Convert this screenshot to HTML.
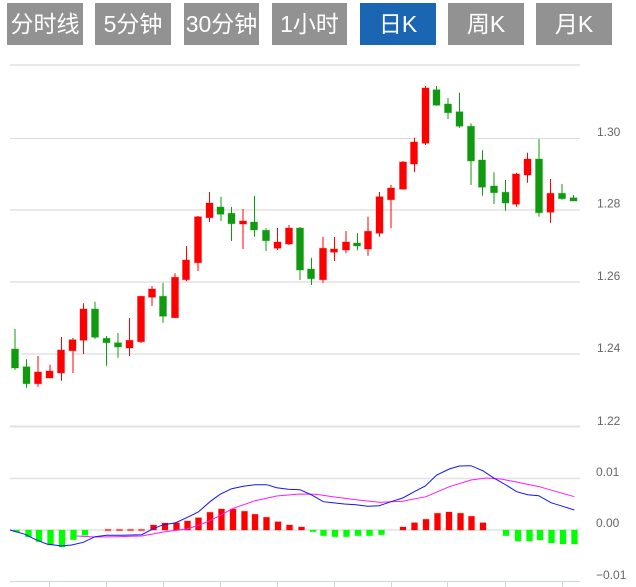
<!DOCTYPE html>
<html lang="zh">
<head>
<meta charset="utf-8">
<title>K线</title>
<style>
html,body{margin:0;padding:0;background:#fff;width:636px;height:587px;overflow:hidden}
body{position:relative;font-family:"Liberation Sans","Noto Sans CJK SC",sans-serif}
.b{position:absolute;top:3px;height:42px;line-height:42px;background:#929292;color:#fff;font-size:23px;text-align:center;white-space:nowrap}
.on{background:#1a66b3}
svg{position:absolute;left:0;top:0}
text{font-family:"Liberation Sans",sans-serif;font-size:12px;fill:#666}
</style>
</head>
<body>
<div class="b" style="left:7px;width:76px">分时线</div>
<div class="b" style="left:95px;width:76px">5分钟</div>
<div class="b" style="left:184px;width:75px">30分钟</div>
<div class="b" style="left:272px;width:75px">1小时</div>
<div class="b on" style="left:360px;width:76px">日K</div>
<div class="b" style="left:448px;width:76px">周K</div>
<div class="b" style="left:536px;width:76px">月K</div>
<svg width="636" height="587" viewBox="0 0 636 587" fill="none">
<g stroke="#e2e2e2">
<path d="M10 65H580" stroke-width="2" stroke="#e8e8e8"/>
<path d="M10 138.5H417M477 138.5H580" stroke="#dcdcdc"/>
<path d="M10 210H580M10 282H580M21 354H68M72 354H580" stroke-width="1.5"/>
<path d="M10 426.5H580" stroke-width="2"/>
<path d="M10 478.5H580" stroke-width="1.5"/>
<path d="M10 530H580" stroke-width="1.5"/>
</g>
<path d="M10 581.5H580M49.5 581V587M106.5 581V587M163.5 581V587M220.5 581V587M277.5 581V587M334.5 581V587M391.5 581V587M447.5 581V587M505.5 581V587M562.5 581V587" stroke="#ccd6eb"/>
<!-- red wicks -->
<path stroke="#f00" d="M38 356V386.7M50 364.7V378M61.5 337V380.7M73 338V373M83.5 303.3V354M129.5 318V356M141 296V343M152 286V306M175 273.3V318M186.5 246V281.3M198 216V271M209.5 192V222M243 209V249M277.5 228V250M289 225V245M323 236.7V282.7M334.5 237V261M346 231V253.3M368 216.7V255.7M379.5 192V236.7M391 185V228.3M403 161V189.3M414.5 137.7V172.3M425.5 86V145M516.5 172.7V206.7M527.5 152.7V182.7M550.5 179V222.7"/>
<!-- green wicks -->
<path stroke="#109a10" d="M15 329V370M26.5 359.3V387.7M95 301.7V339M106.5 336V365.7M118 333V357.7M163 282.7V322.7M221 196.7V221M231.5 207V241M254.5 195.7V236.7M266 228.3V251M300 227V280M311.5 257.7V285M357.5 233.3V250.3M436.5 86V105.7M448 98V119M459.5 92.7V127.7M471 123.3V185M482.5 150.3V195.7M494 172.3V204M505.5 180V210.7M539 139V216.7M562 184V199.7M573.5 195V201"/>
<!-- red bodies -->
<path fill="#f00" stroke="#f00" stroke-opacity=".35" d="M34.5 372h7v11.7h-7zM46 371h7v7h-7zM57.5 350h7v23h-7zM69 339.7h7v11h-7zM80 309h7v31.3h-7zM126 340.3h7v7.7h-7zM137.5 296.3h7v45.4h-7zM148.5 289h7v8.3h-7zM171.5 277.3h7v40.4h-7zM182.5 260h7v19.7h-7zM194.5 216.7h7v46h-7zM206 203h7v14.7h-7zM239.5 221h7v3h-7zM274 242h7v6.3h-7zM285.5 228h7v16h-7zM319.5 248.3h7v31.4h-7zM330.5 249h7v3.3h-7zM342.5 242h7v8h-7zM364.5 231.3h7v17.7h-7zM376 196.7h7v36.6h-7zM387.5 188h7v11.7h-7zM399.5 162h7v27.3h-7zM410.5 142h7v22h-7zM422 88h7v55.3h-7zM512.5 174h7v30.3h-7zM524 159h7v16h-7zM547 193.3h7v19h-7z"/>
<!-- green bodies -->
<path fill="#109a10" stroke="#109a10" stroke-opacity=".35" d="M11.5 349h7v19h-7zM23 366.7h7v17h-7zM91.5 309h7v28.3h-7zM103 338.3h7v4.4h-7zM114.5 342.7h7v4.3h-7zM159.5 296.3h7v20h-7zM217 207h7v7.3h-7zM228 213.3h7v10.4h-7zM250.5 222h7v8h-7zM262.5 230.3h7v10.4h-7zM296.5 228h7v42h-7zM307.5 269h7v9.7h-7zM353.5 243h7v3h-7zM433 89.7h7v15.6h-7zM444.5 104h7v8.7h-7zM456 111.7h7v14.6h-7zM467.5 126.3h7v34.7h-7zM478.5 160h7v27.3h-7zM490.5 186h7v6.7h-7zM502 192.3h7v10.7h-7zM535.5 159h7v53.7h-7zM558.5 193.3h7v5.4h-7zM570 197.7h7v3.3h-7z"/>
<!-- MACD red -->
<path fill="#f00" stroke="#f00" stroke-opacity=".3" d="M105 529h6v2h-6zM116.500 529h6v2h-6zM127.500 529h6v2h-6zM138.500 529h6v2h-6z" opacity=".6"/>
<path fill="#f00" stroke="#f00" stroke-opacity=".3" d="M150.500 525h6v5h-6zM162 523h6v7h-6zM173.500 522.700h6v7.300h-6zM184.500 521h6v9h-6zM195.500 517.700h6v12.300h-6zM207 512.300h6v17.700h-6zM218.500 509h6v21h-6zM230 509h6v21h-6zM241.500 511.300h6v18.700h-6zM252 514.300h6v15.700h-6zM263.500 517.300h6v12.700h-6zM275 521.700h6v8.300h-6zM286.500 525h6v5h-6zM298.500 527h6v3h-6zM400 527h6v3h-6zM411.500 522.700h6v7.300h-6zM423 519.300h6v10.700h-6zM434.500 513.300h6v16.700h-6zM446 512h6v18h-6zM457.500 513.300h6v16.700h-6zM468.500 516.300h6v13.700h-6zM480 522.700h6v7.300h-6z"/>
<!-- MACD green -->
<path fill="#0f0" stroke="#0f0" stroke-opacity=".3" d="M13.500 530h6v2h-6zM25.500 530h6v7h-6zM36 530h6v11.700h-6zM47.500 530h6v15h-6zM59 530h6v17h-6zM70.500 530h6v9.700h-6zM82 530h6v5.300h-6zM310 530h6v1.700h-6zM320.500 530h6v5.700h-6zM332 530h6v6.700h-6zM343.500 530h6v6.700h-6zM355 530h6v5.700h-6zM366.500 530h6v5.700h-6zM378.500 530h6v4.700h-6zM503 530h6v5.700h-6zM515 530h6v11h-6zM526.500 530h6v11h-6zM537 530h6v10h-6zM548.500 530h6v13h-6zM560 530h6v14h-6zM571.500 530h6v14h-6z"/>
<!-- MACD lines -->
<path stroke="#ff19ff" stroke-width="1" d="M76.700 536L95 537L116.700 536.700L141.700 536L163.300 532L186.700 529L198 525.500L210 520.700L221 515L233.300 508.300L255 500.700L276.700 496L300 494L316 494.300L332.700 496.700L356 499.700L379.300 502.300L402.700 501.300L426 496.700L449.300 486.700L471 480L486 478L501 479L517.700 482.300L539.300 486.700L574.300 496.700"/>
<path stroke="#1414f5" stroke-width="1" d="M10 530L25 534.300L35 539.300L46.700 544L61.700 546L71.700 545L83.300 542.300L95 536.700L106.700 535.300L120 535.300L141.700 534.700L153.300 528.700L163.300 524.700L175 523L186.700 517.700L198.300 512L210 501.700L220 494.300L231.700 488.700L243.300 486.300L255 484.700L266.700 484.700L276.700 487.700L288.300 489.300L300 489.700L311.700 495L323.300 501.700L332.700 502.700L344.300 504L356 504.700L367.700 506.300L379.300 505.700L391 501.700L402.700 498L414.300 491.700L425.300 486L436.700 475L449.300 469L459.300 466L471 465.700L482.700 470.700L494.300 478.300L506 485L516.700 491.700L527.700 494.700L538.700 495.700L551 502.700L562.700 506.300L574.300 510"/>
<text x="597" y="136">1.30</text>
<text x="597" y="207.500">1.28</text>
<text x="597" y="280">1.26</text>
<text x="597" y="352">1.24</text>
<text x="597" y="425">1.22</text>
<text x="596" y="476">0.01</text>
<text x="596" y="527">0.00</text>
<text x="596" y="579">−0.01</text>
</svg>
</body>
</html>
